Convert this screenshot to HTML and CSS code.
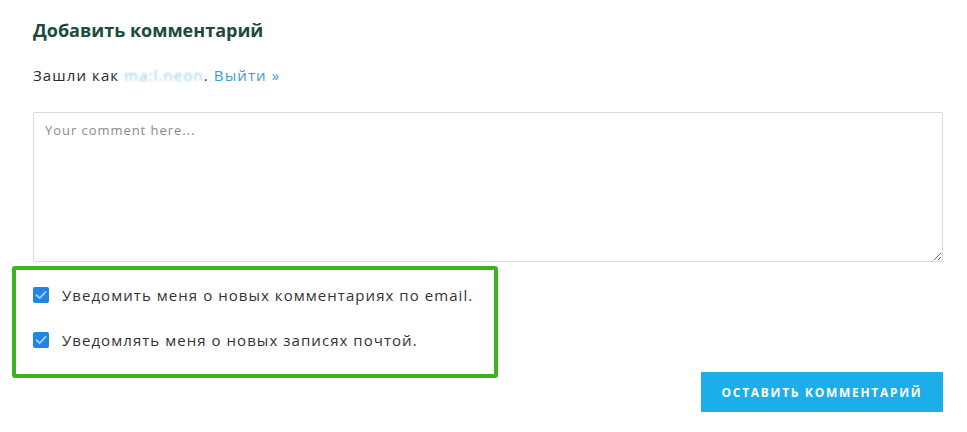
FILE: index.html
```html
<!DOCTYPE html>
<html lang="ru">
<head>
<meta charset="utf-8">
<link rel="stylesheet" href="styles.css">
</head>
<body>
<div class="respond">
  <h3 class="title">Добавить комментарий</h3>
  <p class="logged">Зашли как <a class="user" href="#"><span class="blur">ma:l.neon</span></a>. <a class="logout" href="#">Выйти »</a></p>
  <textarea class="comment" placeholder="Your comment here..."></textarea>
  <div class="highlight">
    <label class="check"><span class="box"><svg viewBox="0 0 16 16" width="16" height="16"><path d="M3.5 8.2 L6.6 11.2 L12.6 4.8" fill="none" stroke="#9fd3ff" stroke-width="1.8" stroke-linecap="round" stroke-linejoin="round"/></svg></span>Уведомить меня о новых комментариях по email.</label>
    <label class="check"><span class="box"><svg viewBox="0 0 16 16" width="16" height="16"><path d="M3.5 8.2 L6.6 11.2 L12.6 4.8" fill="none" stroke="#9fd3ff" stroke-width="1.8" stroke-linecap="round" stroke-linejoin="round"/></svg></span>Уведомлять меня о новых записях почтой.</label>
  </div>
  <div class="actions">
    <button class="submit" type="button">Оставить комментарий</button>
  </div>
</div>
</body>
</html>
```
FILE: styles.css
```css
html, body {
  margin: 0;
  padding: 0;
  background: #ffffff;
}
body {
  font-family: "Open Sans", "Noto Sans", sans-serif;
  color: #2a2a2a;
}
.respond {
  padding: 17px 24px 0 33px;
  display: flex;
  flex-direction: column;
}
.title {
  margin: 0;
  font-size: 18px;
  font-weight: 700;
  color: #1c4a3e;
  line-height: 26px;
  letter-spacing: 0;
}
.logged {
  margin: 21px 0 0 0;
  font-size: 15px;
  line-height: 22px;
  color: #2a2a2a;
  letter-spacing: 1.1px;
}
.user {
  color: #7cc3ea;
  text-decoration: none;
}
.blur {
  filter: blur(1.2px);
  opacity: 0.8;
}
.logout {
  color: #3a9fd6;
  text-decoration: none;
}
.comment {
  margin-top: 26px;
  height: 150px;
  box-sizing: border-box;
  width: 910px;
  border: 1px solid #dcdcdc;
  border-radius: 2px;
  padding: 8px 11px;
  font-family: "Open Sans", "Noto Sans", sans-serif;
  font-size: 13px;
  letter-spacing: 0.95px;
  color: #333;
  resize: vertical;
  outline: none;
}
.comment::placeholder {
  color: #8a8a8a;
}
.highlight {
  margin: 4px 0 0 -21px;
  width: 486px;
  box-sizing: border-box;
  border: 4px solid #3db41f;
  border-radius: 3px;
  padding: 14px 0 23px 17px;
  display: flex;
  flex-direction: column;
  gap: 23px;
}
.check {
  display: flex;
  align-items: center;
  font-size: 15px;
  line-height: 22px;
  color: #333;
  letter-spacing: 1.05px;
}
.box {
  width: 16px;
  height: 16px;
  border-radius: 2px;
  background: #2283e8;
  margin-right: 13px;
  display: flex;
}
.actions {
  display: flex;
  justify-content: flex-end;
  margin-top: -6px;
}
.submit {
  width: 242px;
  height: 40px;
  border: none;
  background: #1caeea;
  color: #ffffff;
  font-family: "Open Sans", "Noto Sans", sans-serif;
  font-weight: 700;
  font-size: 12px;
  letter-spacing: 1.7px;
  text-transform: uppercase;
  cursor: pointer;
}
```
